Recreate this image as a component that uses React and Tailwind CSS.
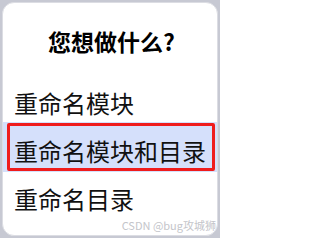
export default function App() {
  const font = { fontFamily: '"Noto Sans CJK SC", "Liberation Sans", sans-serif' };

  return (
    <div className="w-[220px] h-[238px] bg-[#c7c9d3] p-[2px]" style={font}>
      <div className="relative h-[234px] w-[216px] rounded-[12px] bg-white border border-[#dcdde3] overflow-hidden">
        {/* Title */}
        <div className="pt-[22px] h-[54px] text-center text-[23px] leading-[32px] font-bold text-black pl-[3px]">
          您想做什么?
        </div>

        {/* Options */}
        <div className="mt-[17px] h-[48px] pl-[11px] pt-[16px] text-[24px] leading-[26px] text-[#111]">
          重命名模块
        </div>
        <div className="relative h-[50px] pl-[11px] pt-[16px] bg-[#d5e0fb] text-[24px] leading-[26px] text-[#111]">
          重命名模块和目录
          <div className="absolute left-[4px] right-[2px] top-[1px] bottom-[1px] border-[3px] border-[#ef1c1c] rounded-[2px]" />
        </div>
        <div className="h-[48px] pl-[11px] pt-[14px] text-[24px] leading-[26px] text-[#111]">
          重命名目录
        </div>

        {/* Watermark */}
        <div className="absolute right-[1px] bottom-[4px] text-[11px] leading-[12px] text-[#c4c5ca]">
          CSDN @bug攻城狮
        </div>
      </div>
    </div>
  );
}
